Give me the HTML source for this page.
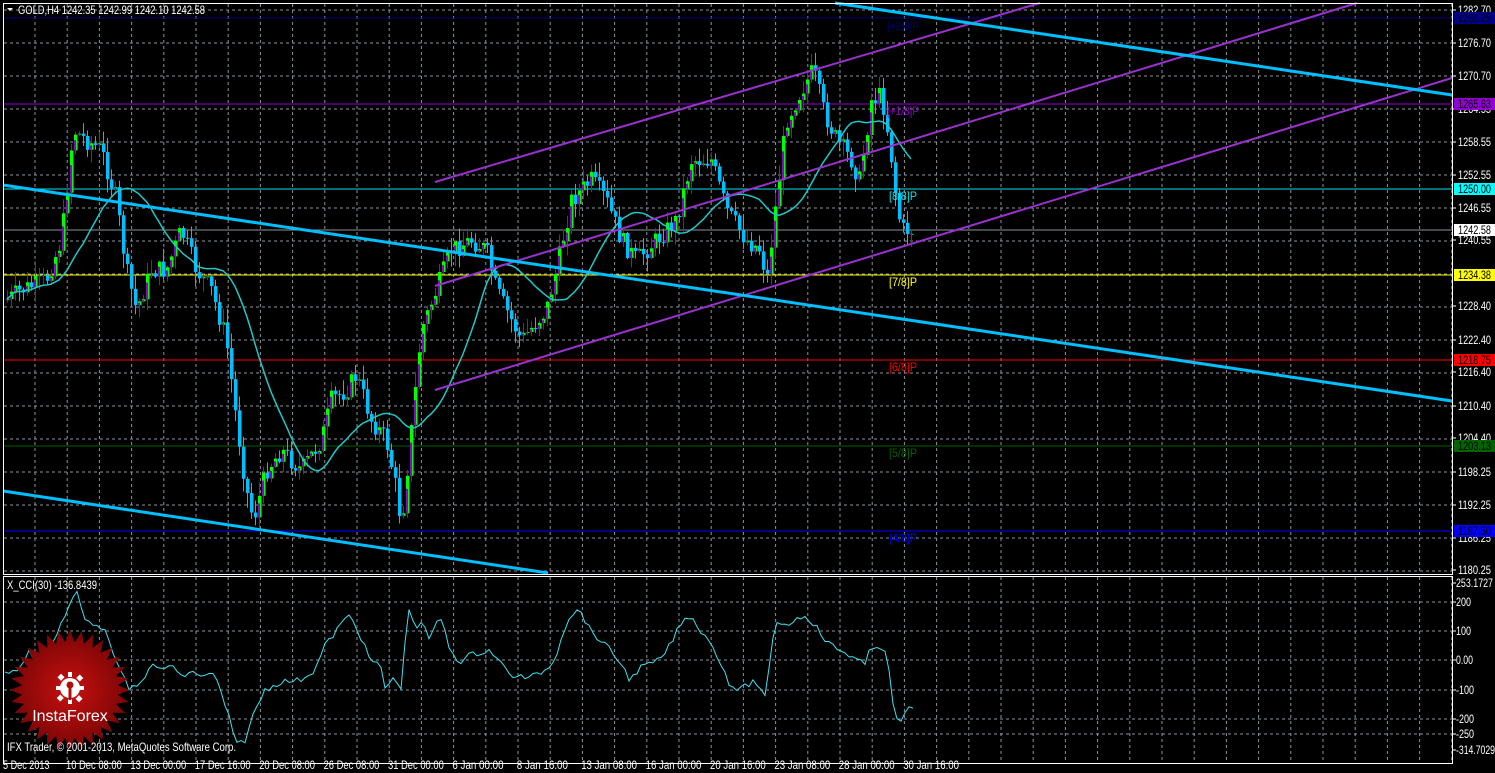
<!DOCTYPE html>
<html><head><meta charset="utf-8"><style>
html,body{margin:0;padding:0;background:#000;width:1495px;height:773px;overflow:hidden}
svg text{font-family:"Liberation Sans",sans-serif;font-size:12px}
</style></head><body>
<svg id="s" width="1495" height="773" xmlns="http://www.w3.org/2000/svg">
<rect width="1495" height="773" fill="#000"/>
<g id="grid" stroke="#8a939c" stroke-width="1" stroke-dasharray="3,3"></g>
<line x1="3" y1="18" x2="1452" y2="18" stroke="#000080" stroke-width="1"/>
<line x1="3" y1="104" x2="1452" y2="104" stroke="#9400d3" stroke-width="1"/>
<line x1="3" y1="189" x2="1452" y2="189" stroke="#00e5ee" stroke-width="1"/>
<line x1="3" y1="230" x2="1452" y2="230" stroke="#8a939c" stroke-width="1"/>
<line x1="3" y1="275" x2="1452" y2="275" stroke="#ffff00" stroke-width="1"/>
<line x1="3" y1="360" x2="1452" y2="360" stroke="#ff0000" stroke-width="1"/>
<line x1="3" y1="446" x2="1452" y2="446" stroke="#006400" stroke-width="1"/>
<line x1="3" y1="531" x2="1452" y2="531" stroke="#0000ff" stroke-width="1"/>
<g id="candles"></g>
<polyline id="ma" fill="none" stroke="#20c8c8" stroke-width="1.5"/>
<g stroke="#9932cc" stroke-width="2">
<line x1="435" y1="182" x2="1040" y2="3"/>
<line x1="435" y1="286" x2="1357" y2="3"/>
<line x1="435" y1="390" x2="1452" y2="78"/>
</g>
<g stroke="#00bfff" stroke-width="3">
<line x1="3" y1="185" x2="1452" y2="401"/>
<line x1="3" y1="491" x2="548" y2="573"/>
<line x1="835" y1="3" x2="1452" y2="95"/>
</g>
<g>
<text x="887" y="30" fill="#000080" textLength="32" lengthAdjust="spacingAndGlyphs">[+2/8]P</text>
<text x="887" y="115" fill="#9400d3" textLength="32" lengthAdjust="spacingAndGlyphs">[+1/8]P</text>
<text x="889" y="200" fill="#00e5ee" textLength="28" lengthAdjust="spacingAndGlyphs">[8/8]P</text>
<text x="889" y="286" fill="#ffff00" textLength="28" lengthAdjust="spacingAndGlyphs">[7/8]P</text>
<text x="889" y="371" fill="#ff0000" textLength="28" lengthAdjust="spacingAndGlyphs">[6/8]P</text>
<text x="889" y="457" fill="#006400" textLength="28" lengthAdjust="spacingAndGlyphs">[5/8]P</text>
<text x="889" y="542" fill="#0000ff" textLength="28" lengthAdjust="spacingAndGlyphs">[4/8]P</text>
</g>
<polyline id="cci" fill="none" stroke="#40e0f0" stroke-width="1"/>
<defs><radialGradient id="rg"><stop offset="0" stop-color="#c81010"/><stop offset="1" stop-color="#7a0606"/></radialGradient></defs>
<g transform="translate(70,690)">
<polygon id="star" fill="url(#rg)"/>
<g fill="#fff">
<circle cx="0" cy="-2" r="10"/>
<rect x="-2" y="-18" width="4" height="5"/><rect x="-2" y="9" width="4" height="5"/>
<rect x="-14" y="-4" width="5" height="4"/><rect x="9" y="-4" width="5" height="4"/>
<rect x="-12" y="-15" width="5" height="5" transform="rotate(45 -9 -12)"/>
<rect x="7" y="-15" width="5" height="5" transform="rotate(45 9 -12)"/>
<rect x="-12" y="6" width="5" height="5" transform="rotate(45 -9 8)"/>
<rect x="7" y="6" width="5" height="5" transform="rotate(45 9 8)"/>
</g>
<circle cx="0" cy="-5" r="3.5" fill="#b00c0c"/>
<rect x="-1.5" y="-2" width="3" height="12" fill="#b00c0c"/>
<text x="0" y="31" text-anchor="middle" fill="#fff" style="font-size:16px">InstaForex</text>
</g>
<rect x="3.5" y="3.5" width="1449" height="571" fill="none" stroke="#fff" stroke-width="1"/>
<rect x="3.5" y="576.5" width="1449" height="187" fill="none" stroke="#fff" stroke-width="1"/>
<polygon points="7,8 13,8 10,11" fill="#fff"/>
<text x="18" y="14" fill="#fff" textLength="187" lengthAdjust="spacingAndGlyphs">GOLD,H4  1242.35 1242.99 1242.10 1242.58</text>
<text x="7" y="589" fill="#fff" textLength="90" lengthAdjust="spacingAndGlyphs">X_CCI(30) -136.8439</text>
<text x="7" y="751" fill="#fff" textLength="229" lengthAdjust="spacingAndGlyphs">IFX Trader, © 2001-2013, MetaQuotes Software Corp.</text>
<g id="axis" fill="#fff"></g>
</svg>
<script>
var NS="http://www.w3.org/2000/svg";
function el(t,a,p){var e=document.createElementNS(NS,t);for(var k in a)e.setAttribute(k,a[k]);(p||document.getElementById('s')).appendChild(e);return e;}
function tx(x,y,s,len,p,fill){var t=el('text',{x:x,y:y,textLength:len,lengthAdjust:'spacingAndGlyphs'},p);if(fill)t.setAttribute('fill',fill);t.textContent=s;return t;}
var grid=document.getElementById('grid');
for(var k=0;k<=17;k++){var y=10+33*k;el('line',{x1:4,y1:y,x2:1452,y2:y},grid);}
[602,631,660,690,719,734].forEach(function(y){el('line',{x1:4,y1:y,x2:1452,y2:y},grid);});
for(var x=35;x<1452;x+=32.2){el('line',{x1:x,y1:4,x2:x,y2:574},grid);el('line',{x1:x,y1:577,x2:x,y2:763},grid);}
var ax=document.getElementById('axis');
var pl=[["1282.70",10],["1276.70",43],["1270.70",76],["1264.55",109],["1258.55",142],["1252.55",175],["1246.55",208],["1240.55",240],["1228.40",306],["1222.40",340],["1216.40",372],["1210.40",406],["1204.40",438],["1198.25",472],["1192.25",505],["1186.25",538],["1180.25",570]];
pl.forEach(function(p){el('line',{x1:1452,y1:p[1],x2:1456,y2:p[1],stroke:'#fff'},ax);tx(1458,p[1]+4,p[0],33,ax);});
var bx=[["1281.25",18,"#00008b","#000"],["1265.63",104,"#9400d3","#000"],["1250.00",189,"#00ffff","#000"],["1242.58",230,"#fff","#000"],["1234.38",275,"#ffff00","#000"],["1218.75",360,"#ff0000","#000"],["1203.13",446,"#006400","#000"],["1187.50",531,"#0000ff","#000"]];
bx.forEach(function(b){el('rect',{x:1454,y:b[1]-6,width:41,height:12,fill:b[2]},ax);tx(1458,b[1]+4,b[0],33,ax,b[3]);});
[["253.1727",583,37],["200",602,15],["100",631,15],["0.00",660,17],["-100",690,18],["-200",719,18],["-250",734,18],["-314.7029",750,39]].forEach(function(p){el('line',{x1:1452,y1:p[1],x2:1456,y2:p[1],stroke:'#fff'},ax);tx(1456,p[1]+4,p[0],p[2],ax);});
var dl=["5 Dec 2013","10 Dec 08:00","13 Dec 00:00","17 Dec 16:00","20 Dec 08:00","26 Dec 08:00","31 Dec 00:00","6 Jan 00:00","8 Jan 16:00","13 Jan 08:00","16 Jan 00:00","20 Jan 16:00","23 Jan 08:00","28 Jan 00:00","30 Jan 16:00"];
dl.forEach(function(d,i){var x=i==0?3:66+64.4*(i-1);tx(x,769,d,d.length*4.65,ax);});
var kp=[[5,300],[20,290],[45,280],[60,240],[72,130],[85,140],[100,150],[115,200],[125,270],[135,310],[150,270],[165,270],[180,230],[195,270],[210,290],[225,340],[235,420],[245,490],[252,520],[265,470],[280,450],[300,470],[320,440],[330,400],[345,390],[355,375],[370,420],[385,440],[395,490],[400,525],[410,430],[420,330],[435,290],[450,250],[470,240],[485,250],[495,290],[510,320],[520,340],[545,310],[555,270],[570,200],[590,180],[605,200],[620,240],[635,260],[655,240],[675,220],[690,160],[710,160],[725,210],[745,240],[760,250],[765,285],[775,200],[785,120],[800,90],[812,70],[822,110],[835,140],[850,160],[858,180],[870,100],[880,95],[888,140],[895,200],[900,230],[912,230]];
function interp(arr,x){for(var i=1;i<arr.length;i++){if(x<=arr[i][0]){var a=arr[i-1],b=arr[i];return a[1]+(b[1]-a[1])*(x-a[0])/(b[0]-a[0]);}}return arr[arr.length-1][1];}
var seed=7;function rnd(){seed=(seed*9301+49297)%233280;return seed/233280;}
var cg=document.getElementById('candles');var prev=300;var closes=[];var xs=[];
for(var x=6;x<=912;x+=4){var c=interp(kp,x)+(rnd()-0.5)*20;var o=prev;var hi=Math.min(o,c)-rnd()*14-1;var lo=Math.max(o,c)+rnd()*14+1;
if(c<o){el('line',{x1:x+1.5,y1:hi,x2:x+1.5,y2:lo,stroke:'#9400d3'},cg);el('rect',{x:x,y:c,width:3.5,height:Math.max(1,o-c),fill:'#00ff00'},cg);el('rect',{x:x,y:c+(o-c)*0.35,width:2,height:Math.max(1,(o-c)*0.65),fill:'#9400d3'},cg);}
else{el('line',{x1:x+1.5,y1:hi,x2:x+1.5,y2:lo,stroke:'#00bfff'},cg);el('rect',{x:x,y:o,width:3.5,height:Math.max(1,c-o),fill:'#00bfff'},cg);}
closes.push(c);xs.push(x);prev=c;}
var mp=[];for(var i=0;i<closes.length;i++){var n=Math.min(i+1,20),s=0;for(var j=i-n+1;j<=i;j++)s+=closes[j];mp.push((xs[i]+1)+","+(s/n).toFixed(1));}
document.getElementById('ma').setAttribute('points',mp.join(' '));
var cc=[[5,672],[20,670],[28,650],[35,660],[50,650],[60,625],[68,610],[76,590],[85,620],[100,625],[110,640],[118,668],[130,690],[140,685],[150,665],[160,670],[172,664],[180,678],[190,672],[200,675],[215,675],[230,720],[235,745],[245,740],[255,710],[265,690],[280,682],[300,680],[315,670],[325,645],[330,640],[340,625],[350,615],[358,630],[370,660],[380,665],[385,688],[395,675],[400,700],[405,640],[410,605],[415,630],[420,620],[430,640],[440,615],[450,650],[460,662],[470,655],[490,650],[500,662],[510,675],[530,678],[545,670],[555,660],[560,640],[570,615],[580,610],[590,630],[600,640],[610,650],[620,662],[630,680],[640,668],[660,660],[670,645],[680,625],[690,615],[700,630],[710,640],[715,655],[720,660],[730,685],[740,690],[755,680],[760,690],[766,700],[770,660],[775,620],[785,625],[795,620],[805,615],[815,625],[825,640],[835,648],[850,655],[865,665],[870,650],[878,645],[886,650],[890,680],[895,720],[900,722],[910,708],[915,705]];
var cp=[];for(var x=5;x<=915;x+=4){cp.push(x+","+(interp(cc,x)+(rnd()-0.5)*6).toFixed(1));}
document.getElementById('cci').setAttribute('points',cp.join(' '));
var st=[];for(var i=0;i<64;i++){var r=i%2?48:60,a=i*Math.PI/32;st.push((r*Math.cos(a)).toFixed(1)+","+(r*Math.sin(a)).toFixed(1));}
document.getElementById('star').setAttribute('points',st.join(' '));
</script>
</body></html>
